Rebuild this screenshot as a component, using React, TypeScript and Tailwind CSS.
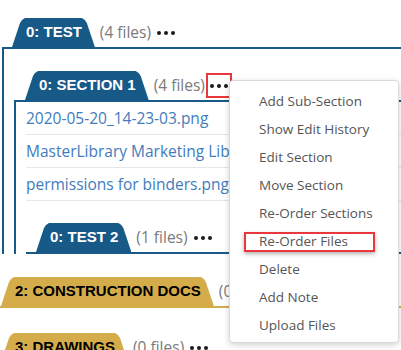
import { useState } from 'react';

const BLUE = 'bg-[#175a88]';

interface TabProps {
  label: string;
  gold?: boolean;
}

// Folder-style tab with sloped sides and softened top corners
function Tab({ label, gold }: TabProps) {
  return (
    <div
      className={`inline-flex items-center h-[29px] pl-[14px] pr-[13px] font-['Liberation_Sans',Arial,sans-serif] font-bold text-[15px] whitespace-nowrap [clip-path:polygon(0_100%,8px_5px,10px_2px,13px_0,calc(100%_-_13px)_0,calc(100%_-_10px)_2px,calc(100%_-_8px)_5px,100%_100%)] ${
        gold ? 'bg-[#d4ad4a] text-black' : `${BLUE} text-white`
      }`}
    >
      {label}
    </div>
  );
}

function Dots() {
  return (
    <span className="inline-flex items-center gap-[3px]">
      <span className="w-[4px] h-[4px] rounded-full bg-[#1a1a1a]" />
      <span className="w-[4px] h-[4px] rounded-full bg-[#1a1a1a]" />
      <span className="w-[4px] h-[4px] rounded-full bg-[#1a1a1a]" />
    </span>
  );
}

interface HeaderProps {
  label: string;
  count: number;
  gold?: boolean;
  highlight?: boolean;
  indent?: string;
}

function SectionHeader({ label, count, gold, highlight, indent = 'pl-[10px]' }: HeaderProps) {
  return (
    <div className={`flex items-center h-[29px] ${indent}`}>
      <Tab label={label} gold={gold} />
      <span className="ml-[5px] text-[15.5px] text-[#7a7a7a] whitespace-nowrap">({count} files)</span>
      {highlight ? (
        <span className="ml-[1px] flex items-center h-[25px] px-[2px] border-2 border-[#e8383d]">
          <Dots />
        </span>
      ) : (
        <span className="ml-[6px] flex items-center">
          <Dots />
        </span>
      )}
    </div>
  );
}

const files = ['2020-05-20_14-23-03.png', 'MasterLibrary Marketing Library.pdf', 'permissions for binders.png'];

const menuItems = [
  'Add Sub-Section',
  'Show Edit History',
  'Edit Section',
  'Move Section',
  'Re-Order Sections',
  'Re-Order Files',
  'Delete',
  'Add Note',
  'Upload Files',
];

export default function App() {
  const [open] = useState(true);

  return (
    <div className="relative w-[401px] h-[350px] overflow-hidden bg-white pt-[18px] font-['Open_Sans',sans-serif]">
      {/* 0: TEST */}
      <div className="ml-[2px]">
        <SectionHeader label="0: TEST" count={4} />
        <div className="border-t-2 border-l-2 border-[#175a88] pl-[10px] pt-[22px]">
          {/* 0: SECTION 1 */}
          <SectionHeader label="0: SECTION 1" count={4} highlight indent="pl-[11px]" />
          <div className="border-t-2 border-l-2 border-[#175a88] pl-[10px]">
            {files.map((f) => (
              <div
                key={f}
                className="h-[33px] flex items-center pt-[2px] border-b border-[#e6e6e6] text-[15.5px] text-[#3f7cbc] whitespace-nowrap overflow-hidden"
              >
                {f}
              </div>
            ))}
            {/* 0: TEST 2 */}
            <div className="pt-[22px]">
              <SectionHeader label="0: TEST 2" count={1} />
              <div className="border-t-2 border-[#175a88]" />
            </div>
          </div>
        </div>
      </div>

      {/* 2: CONSTRUCTION DOCS */}
      <div className="mt-[23px]">
        <SectionHeader label="2: CONSTRUCTION DOCS" count={0} gold indent="pl-[1px]" />
        <div className="border-t-2 border-[#d4ad4a]" />
      </div>

      {/* 3: DRAWINGS */}
      <div className="mt-[25px]">
        <SectionHeader label="3: DRAWINGS" count={0} gold indent="pl-[1px]" />
      </div>

      {/* Context menu */}
      {open && (
        <div className="absolute left-[229px] top-[80px] w-[170px] h-[263px] bg-white border border-[#d9d9d9] rounded-[4px] shadow-[0_2px_6px_rgba(0,0,0,0.18)] pt-[6px]">
          {menuItems.map((item) => (
            <div key={item} className="relative h-[28px] flex items-center pl-[29px] text-[13.5px] text-[#555] whitespace-nowrap">
              {item}
              {item === 'Re-Order Files' && (
                <span className="absolute left-[14px] top-[5px] w-[131px] h-[20px] border-2 border-[#e8383d] shadow-[0_2px_4px_rgba(0,0,0,0.3)]" />
              )}
            </div>
          ))}
        </div>
      )}
    </div>
  );
}
